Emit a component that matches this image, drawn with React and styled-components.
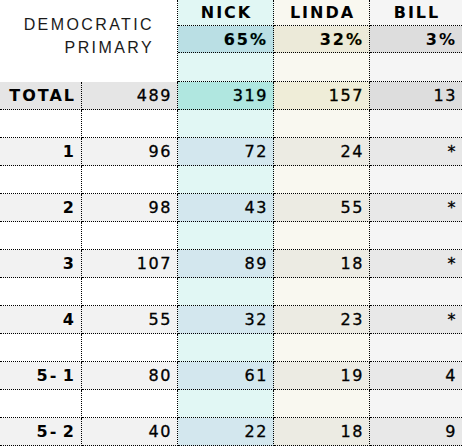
import React from "react";
import styled, { createGlobalStyle } from "styled-components";

const GlobalStyle = createGlobalStyle`
  html, body { margin: 0; padding: 0; background: #ffffff; }
  *, *::before, *::after { box-sizing: border-box; }
`;

const DOT = "1px dotted #000";

const Table = styled.div`
  display: grid;
  grid-template-columns: 82px 96px 96px 96px 92px;
  grid-template-rows: 26px 27px 29px repeat(13, 28px);
  width: 462px;
  font-family: "DejaVu Sans", Verdana, sans-serif;
  color: #000;
`;

const Title = styled.div`
  grid-column: 1 / 3;
  grid-row: 1 / 4;
  border-right: ${DOT};
  padding: 13px 23px 0 0;
  text-align: right;
  font-family: "Liberation Sans", Arial, sans-serif;
  font-size: 16px;
  line-height: 23px;
  letter-spacing: 2.4px;
  color: #1a1a1a;
`;

const BaseCell = styled.div`
  display: flex;
  align-items: center;
  background: ${(p) => p.$bg || "#ffffff"};
  border-right: ${(p) => (p.$last ? "none" : DOT)};
  border-bottom: ${(p) => (p.$noBottom ? "none" : DOT)};
`;

const NameCell = styled(BaseCell)`
  justify-content: center;
  font-weight: bold;
  font-size: 16px;
  letter-spacing: 2px;
  padding-left: 2px;
`;

const PctCell = styled(BaseCell)`
  justify-content: flex-end;
  padding-right: 5px;
  font-weight: bold;
  font-size: 16px;
  letter-spacing: 2px;
  text-shadow: 0 0 1px ${(p) => p.$glow};
`;

const LabelCell = styled(BaseCell)`
  justify-content: flex-end;
  padding-right: 5px;
  font-weight: bold;
  font-size: 16px;
  letter-spacing: 2px;
  word-spacing: -3px;
`;

const NumCell = styled(BaseCell)`
  justify-content: flex-end;
  padding-right: 5px;
  font-size: 16px;
  letter-spacing: 1.6px;
  -webkit-text-stroke: 0.3px #000;
  text-shadow: ${(p) => (p.$glow ? `0 0 1px ${p.$glow}` : "none")};
`;

const candidates = [
  {
    name: "NICK",
    pct: "65%",
    col: "#e1f7f4",
    head: "#badfe4",
    total: "#b0e7e0",
    row: "#d3e7ee",
    glow: "rgba(0, 170, 160, 0.55)",
  },
  {
    name: "LINDA",
    pct: "32%",
    col: "#f9f8f0",
    head: "#ecead9",
    total: "#efedd8",
    row: "#ecebe3",
    glow: "rgba(200, 180, 0, 0.5)",
  },
  {
    name: "BILL",
    pct: "3%",
    col: "#f5f5f5",
    head: "#dddddd",
    total: "#dddddd",
    row: "#e8e8e8",
    glow: "rgba(0, 0, 0, 0)",
  },
];

const rows = [
  { label: "TOTAL", total: "489", vals: ["319", "157", "13"], isTotal: true },
  { label: "1", total: "96", vals: ["72", "24", "*"] },
  { label: "2", total: "98", vals: ["43", "55", "*"] },
  { label: "3", total: "107", vals: ["89", "18", "*"] },
  { label: "4", total: "55", vals: ["32", "23", "*"] },
  { label: "5- 1", total: "80", vals: ["61", "19", "4"] },
  { label: "5- 2", total: "40", vals: ["22", "18", "9"] },
];

function DataRow({ row }) {
  const baseBg = row.isTotal ? "#e5e5e5" : "#f2f2f2";
  return (
    <>
      <LabelCell $bg={baseBg}>{row.label}</LabelCell>
      <NumCell $bg={baseBg}>{row.total}</NumCell>
      {candidates.map((c, i) => (
        <NumCell
          key={c.name}
          $bg={row.isTotal ? c.total : c.row}
          $last={i === candidates.length - 1}
          $glow={row.isTotal ? c.glow : null}
        >
          {row.vals[i]}
        </NumCell>
      ))}
    </>
  );
}

function SpacerRow() {
  return (
    <>
      <BaseCell />
      <BaseCell />
      {candidates.map((c, i) => (
        <BaseCell key={c.name} $bg={c.col} $last={i === candidates.length - 1} />
      ))}
    </>
  );
}

export default function App() {
  return (
    <>
      <GlobalStyle />
      <Table>
        <Title>
          DEMOCRATIC
          <br />
          PRIMARY
        </Title>
        {candidates.map((c, i) => (
          <NameCell key={c.name} $bg={c.col} $last={i === candidates.length - 1}>
            {c.name}
          </NameCell>
        ))}
        {candidates.map((c, i) => (
          <PctCell
            key={c.name}
            $bg={c.head}
            $glow={c.glow}
            $last={i === candidates.length - 1}
          >
            {c.pct}
          </PctCell>
        ))}
        {candidates.map((c, i) => (
          <BaseCell key={c.name} $bg={c.col} $last={i === candidates.length - 1} />
        ))}
        {rows.map((r, idx) => (
          <React.Fragment key={r.label}>
            {idx > 0 && <SpacerRow />}
            <DataRow row={r} />
          </React.Fragment>
        ))}
      </Table>
    </>
  );
}
